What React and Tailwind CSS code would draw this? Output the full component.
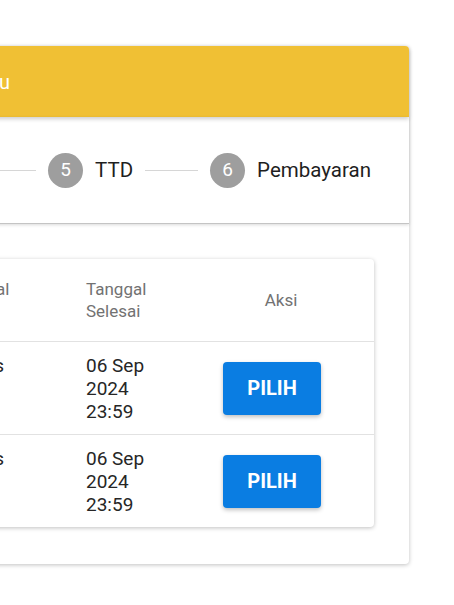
const steps = [
  { n: 1, label: 'Pilih Paket' },
  { n: 2, label: 'Pilih Jadwal' },
  { n: 3, label: 'Data Diri' },
  { n: 4, label: 'Dokumen' },
  { n: 5, label: 'TTD' },
  { n: 6, label: 'Pembayaran' },
];

const rows = [
  { nama: 'Jadwal Ujian Gelombang 1', jenis: 'Teknis', selesai: ['06 Sep', '2024', '23:59'] },
  { nama: 'Jadwal Ujian Gelombang 2', jenis: 'Teknis', selesai: ['06 Sep', '2024', '23:59'] },
];

function Step({ n, label }) {
  return (
    <div className="flex items-center gap-3 shrink-0">
      <div className="w-[35px] h-[35px] rounded-full bg-[#9e9e9e] text-white flex items-center justify-center text-[19px]">
        {n}
      </div>
      <span className="text-[20.5px] text-[#1f1f1f]">{label}</span>
    </div>
  );
}

export default function App() {
  return (
    <div className="min-h-screen bg-white overflow-hidden pt-[46px] font-['Roboto',sans-serif]">
      <div className="-ml-[400px] w-[809px] bg-white rounded shadow-[0_1px_4px_rgba(0,0,0,0.25)]">
        <div className="h-[71px] bg-[#f0c034] rounded-t flex items-center justify-end pr-[399px] shadow-[0_2px_4px_rgba(0,0,0,0.2)]">
          <span className="text-white text-[20px] font-normal">Silakan pilih jadwal terlebih dahulu</span>
        </div>

        <div className="h-[107px] flex items-center justify-end gap-3 pr-[38px] border-b border-[#c4c4c4] shadow-[0_1px_3px_rgba(0,0,0,0.15)]">
          {steps.map((s, i) => (
            <div key={s.n} className="flex items-center gap-3 shrink-0">
              {i > 0 && <div className="w-[53px] h-px bg-[#d6d6d6]" />}
              <Step n={s.n} label={s.label} />
            </div>
          ))}
        </div>

        <div className="px-[35px] pt-[35px] pb-[37px]">
          <div className="bg-white rounded shadow-[0_1px_4px_rgba(0,0,0,0.25)]">
            <div className="grid grid-cols-[298px_137px_118px_186px] border-b border-[#e2e2e2] text-[17px] leading-[22px] text-[#727272]">
              <div className="px-4 py-[19px]">Nama Jadwal</div>
              <div className="px-4 py-[19px]">Tanggal Mulai</div>
              <div className="px-4 py-[19px]">Tanggal Selesai</div>
              <div className="px-4 flex items-center justify-center">Aksi</div>
            </div>
            {rows.map((r, i) => (
              <div
                key={i}
                className={`grid grid-cols-[298px_137px_118px_186px] text-[19px] leading-[23px] text-[#262626] ${i < rows.length - 1 ? 'border-b border-[#e2e2e2]' : ''}`}
              >
                <div className="px-4 pt-3 pb-[11px]">{r.nama}</div>
                <div className="px-4 pt-3 pb-[11px]">{r.jenis}</div>
                <div className="px-4 pt-3 pb-[11px]">
                  {r.selesai.map((l) => (
                    <div key={l}>{l}</div>
                  ))}
                </div>
                <div className="pl-[35px] flex items-center">
                  <button className="w-[98px] h-[53px] rounded bg-[#0a7de2] text-white text-[20px] font-bold shadow-[0_2px_4px_rgba(0,0,0,0.25)]">
                    PILIH
                  </button>
                </div>
              </div>
            ))}
          </div>
        </div>
      </div>
    </div>
  );
}
